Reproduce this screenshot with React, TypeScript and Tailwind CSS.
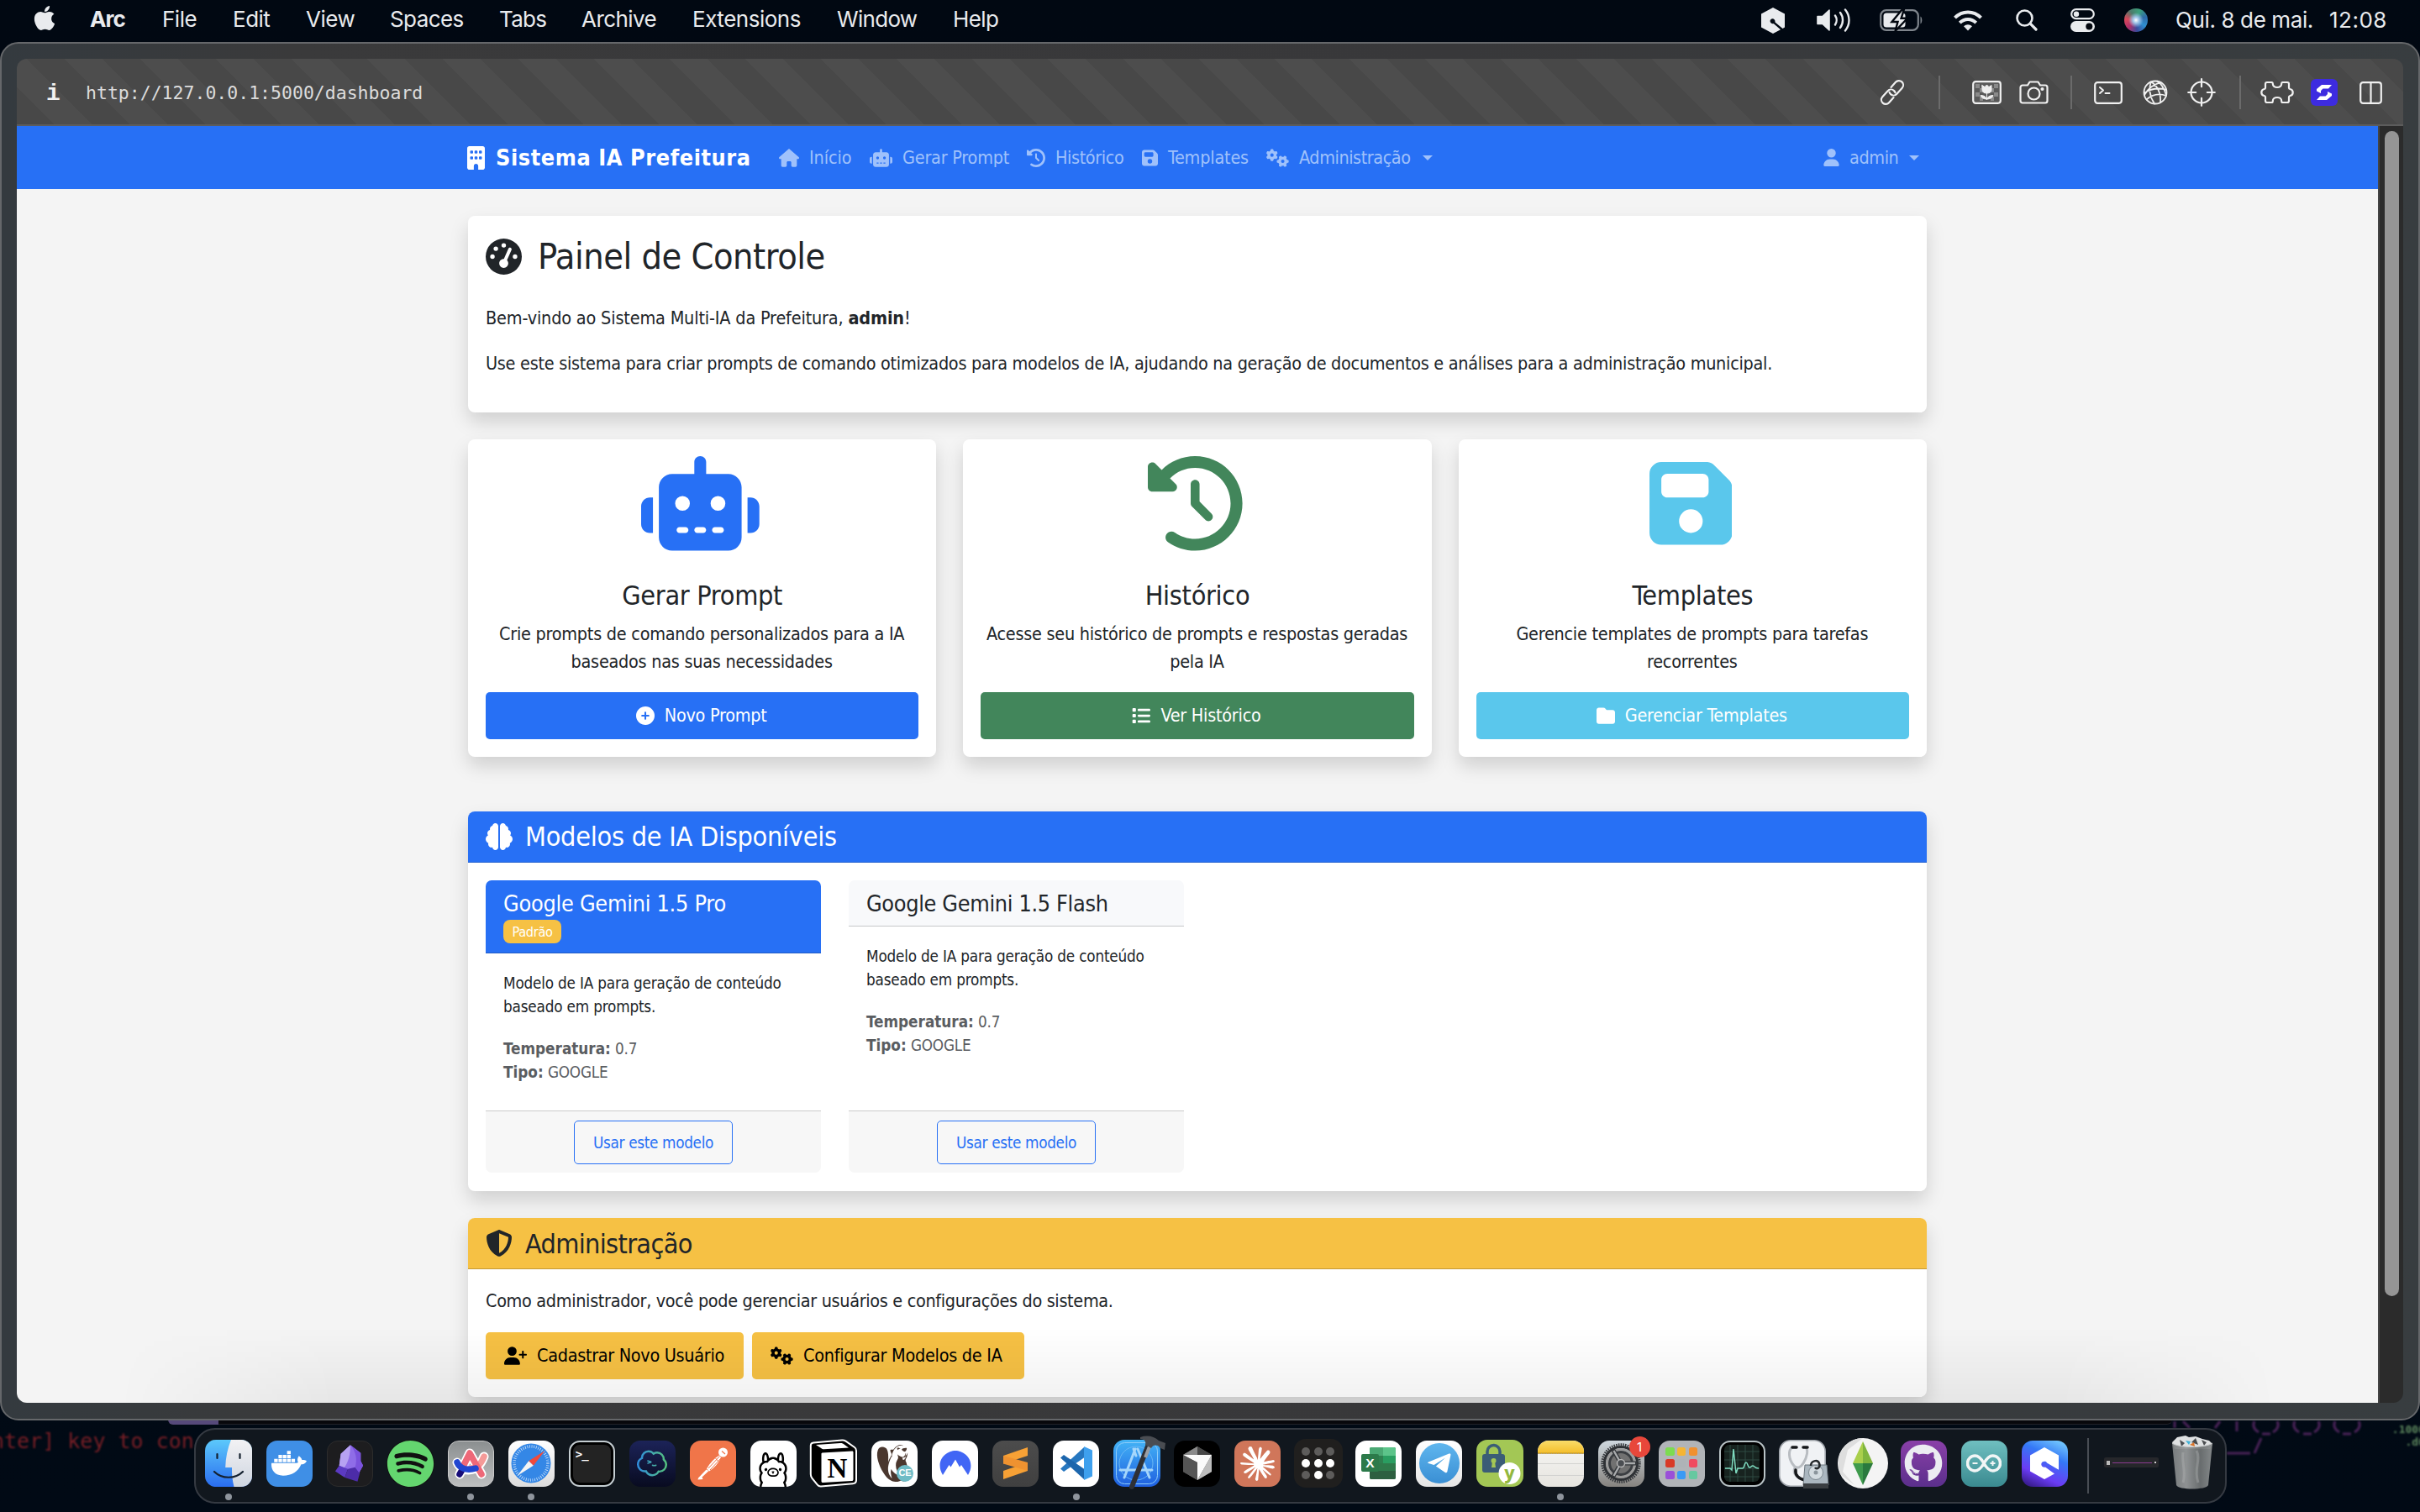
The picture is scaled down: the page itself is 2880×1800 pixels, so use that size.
import React from "react";
import type { ReactNode } from "react";
import {
  FaApple,
  FaBuilding,
  FaHouse,
  FaRobot,
  FaClockRotateLeft,
  FaFloppyDisk,
  FaGears,
  FaUser,
  FaGaugeHigh,
  FaCirclePlus,
  FaList,
  FaFolder,
  FaBrain,
  FaShieldHalved,
  FaUserPlus,
  FaDocker,
  FaSpotify,
  FaGithub,
} from "react-icons/fa6";
import { SiClaude, SiOllama, SiDbeaver, SiTermius } from "react-icons/si";

/* ---------- macOS menu bar ---------- */

function Menu({ w, ls, children }: { w: string; ls: string; children: ReactNode }) {
  return <span className={`shrink-0 whitespace-nowrap ${w} ${ls}`}>{children}</span>;
}

function MenuBar() {
  return (
    <div className="flex h-[50px] shrink-0 items-start pt-[7px] font-['Inter',sans-serif] text-[26px] leading-[32px] text-[#e9ebee]">
      <div className="flex w-[107px] shrink-0 pl-[38px]">
        <FaApple className="-mt-[2px] h-[33px] w-[30px]" />
      </div>
      <Menu w="w-[86px]" ls="font-bold tracking-[-0.9px]">Arc</Menu>
      <Menu w="w-[84px]" ls="tracking-[-0.5px]">File</Menu>
      <Menu w="w-[87px]" ls="tracking-[-0.5px]">Edit</Menu>
      <Menu w="w-[100px]" ls="tracking-[-0.5px]">View</Menu>
      <Menu w="w-[130px]" ls="tracking-[-0.6px]">Spaces</Menu>
      <Menu w="w-[98px]" ls="tracking-[-0.7px]">Tabs</Menu>
      <Menu w="w-[132px]" ls="tracking-[-0.55px]">Archive</Menu>
      <Menu w="w-[172px]" ls="tracking-[-0.48px]">Extensions</Menu>
      <Menu w="w-[138px]" ls="tracking-[-0.7px]">Window</Menu>
      <Menu w="w-[80px]" ls="tracking-[-0.6px]">Help</Menu>
      <div className="grow" />
      <div className="flex h-[34px] items-center">
        <svg className="mr-[38px] h-[31px] w-[28px]" viewBox="0 0 28 31">
          <path d="M14 0 28 7.5v16L25.500 25 16.500 17.500c.4-2.600-1.300-4.400-3.300-4.300-2 .2-3.200 2.300-2.200 4.300.8 1.500 2.500 2 3.700 1.500L23 26.300 14 31 0 23.500v-16z" fill="#e9ebee" />
        </svg>
        <svg className="mr-[35px] h-[28px] w-[40px]" viewBox="0 0 40 28" fill="none" stroke="#e9ebee" strokeWidth="2.400" strokeLinecap="round">
          <path d="M1 9.500h6l8-7.500v24l-8-7.500H1z" fill="#e9ebee" strokeWidth="1.600" strokeLinejoin="round" />
          <path d="M22 8.500c2.200 3.200 2.200 7.800 0 11M28 5c4 5.200 4 12.800 0 18M34 1.500c6 7.500 6 17.500 0 25" />
        </svg>
        <svg className="mr-[37px] h-[26px] w-[51px]" viewBox="0 0 51 26">
          <rect x="1.200" y="1.200" width="44.600" height="23.600" rx="6.500" fill="none" stroke="#7f858c" strokeWidth="2.200" />
          <path d="M48.500 8.500c2.400 1.400 2.400 7.600 0 9z" fill="#7f858c" />
          <rect x="4.500" y="4.500" width="26" height="17" rx="3.500" fill="#e9ebee" />
          <path d="M27 0 14.500 15h7L18.500 26 33 10.800h-7.400L29 0z" fill="#e9ebee" stroke="#02070f" strokeWidth="2.400" />
        </svg>
        <svg className="mr-[40px] h-[26px] w-[34px]" viewBox="0 0 34 26" fill="none" stroke="#e9ebee" strokeWidth="4">
          <path d="M1.500 10.200c8.600-8.900 22.400-8.900 31 0" />
          <path d="M7.300 16.200c5.400-5.500 14-5.500 19.400 0" />
          <path d="M17 25.500l-5-5.200c2.800-2.700 7.200-2.700 10 0z" fill="#e9ebee" stroke="none" />
        </svg>
        <svg className="mr-[39px] h-[26px] w-[26px]" viewBox="0 0 26 26" fill="none" stroke="#e9ebee" strokeLinecap="round">
          <circle cx="10.500" cy="10.500" r="9" strokeWidth="2.600" />
          <path d="M17.200 17.200 24 24" strokeWidth="3.200" />
        </svg>
        <svg className="mr-[35px] h-[28px] w-[29px]" viewBox="0 0 29 28">
          <rect x="1.200" y="1.200" width="26.600" height="11" rx="5.500" fill="none" stroke="#e9ebee" strokeWidth="2.200" />
          <circle cx="7" cy="6.700" r="3.200" fill="#e9ebee" />
          <rect x="0" y="15" width="29" height="13" rx="6.500" fill="#e9ebee" />
          <circle cx="22.300" cy="21.500" r="4" fill="#02070f" />
        </svg>
        <div className="mr-[33px] h-[28px] w-[28px] rounded-full bg-[radial-gradient(circle_at_50%_50%,#ffffff_0%,#9fc4e8_18%,transparent_45%),conic-gradient(from_20deg,#3aa17c,#2f6aa8,#2f8fd0,#3a4a9c,#b02f6a,#d8495a,#4c7a6a,#3aa17c)]" />
        <span className="w-[183px] whitespace-nowrap tracking-[-0.38px]">Qui. 8 de mai.</span>
        <span className="w-[108px] whitespace-nowrap tracking-[0.5px]">12:08</span>
      </div>
    </div>
  );
}

/* ---------- Browser toolbar ---------- */

const line = { fill: "none", stroke: "#f0f0f0", strokeWidth: 2.2, strokeLinecap: "round" as const, strokeLinejoin: "round" as const };

function Divider({ m }: { m: string }) {
  return <div className={`h-[40px] w-[2px] shrink-0 bg-[#6b6b6b] ${m}`} />;
}

function Toolbar() {
  return (
    <div className="flex h-[80px] shrink-0 items-center rounded-t-[12px] border-b-2 border-[#5c5c5c] bg-[repeating-linear-gradient(45deg,#484848_0px,#484848_31.8px,#4d4d4d_31.800px,#4d4d4d_63.600px)] pt-[2px] font-['DejaVu_Sans_Mono',monospace]">
      <span className="w-[82px] pl-[35px] pt-[3px] font-['Liberation_Mono',monospace] text-[28px] font-bold leading-[40px] text-[#f2f2f2]">i</span>
      <span className="pt-[2px] text-[21.5px] leading-[40px] text-[#dcdcdc]">http://127.0.0.1:5000/dashboard</span>
      <div className="grow" />
      <svg className="h-[32px] w-[32px] overflow-visible" viewBox="0 0 32 32" {...line}>
        <g transform="rotate(-48 16 16)">
          <path d="M12.500 21.200H4.300a5.200 5.200 0 0 1 0-10.400h9.400a5.200 5.200 0 0 1 5.200 5.200c0 1-.3 2-.8 2.800" />
          <path d="M19.500 10.800h8.200a5.200 5.200 0 0 1 0 10.400h-9.400a5.200 5.200 0 0 1-5.200-5.200c0-1 .3-2 .8-2.800" />
        </g>
      </svg>
      <Divider m="ml-[39px] mr-[38px]" />
      <svg className="h-[28px] w-[35px]" viewBox="0 0 35 28" {...line}>
        <rect x="1.200" y="1.200" width="32.600" height="25.600" rx="3" fill="#5a5a5a" />
        <path d="M4 4h5v5H4zM26 4h5v5h-5zM4 14h5v5H4zM26 14h5v5h-5zM9 9h4v5H9zM22 9h4v5h-4zM9 19h4v5H9zM22 19h4v5h-4z" fill="#8a8a8a" stroke="none" />
        <path d="M12 5.500l3 2 2.500-2.500L20 7.500l3-2v5.500c0 2.500-2 4-5.500 4S12 13.500 12 11zM17.500 14v8M17.500 22c-4.500 0-7-2-7.500-4.500 4 0 6.500 1.500 7.500 4.500zM17.500 22c4.500 0 7-2 7.500-4.500-4 0-6.500 1.500-7.500 4.500z" fill="#f0f0f0" strokeWidth="1" />
      </svg>
      <svg className="ml-[21px] h-[28px] w-[35px]" viewBox="0 0 35 28" {...line}>
        <path d="M4 5.500h6l2.500-4h10l2.500 4h6a2.500 2.500 0 0 1 2.500 2.500v16a2.500 2.500 0 0 1-2.500 2.500H4A2.500 2.500 0 0 1 1.500 24V8A2.500 2.500 0 0 1 4 5.500z" />
        <circle cx="17.500" cy="15.500" r="7" />
        <circle cx="27.500" cy="10" r="1" />
      </svg>
      <Divider m="ml-[26px] mr-[26px]" />
      <svg className="h-[27px] w-[34px]" viewBox="0 0 34 27" {...line}>
        <rect x="1.200" y="1.200" width="31.600" height="24.600" rx="3" />
        <path d="M7 7l4 3.500L7 14M13.500 14h5" strokeWidth="2" />
      </svg>
      <svg className="ml-[24px] h-[30px] w-[30px]" viewBox="0 0 30 30" {...line} strokeWidth="1.800">
        <circle cx="15" cy="15" r="13.500" />
        <path d="M10 2.500c-3 7-2 17 4 26M10 2.500c7 4 12 13 11 24.500M21.500 3.200c-8 2-15 7-19.500 14.800M27.800 11.500c-9-2-19-.5-26 4M28 19c-7-2.500-16-2-23.500 4.500M17 1.600c5 3 8.500 8 10.800 16.400" />
      </svg>
      <svg className="ml-[23px] h-[34px] w-[34px]" viewBox="0 0 34 34" {...line}>
        <circle cx="17" cy="17" r="12.500" />
        <path d="M17 1.200v9M17 23.800v9M1.200 17h9M23.800 17h9" />
      </svg>
      <Divider m="ml-[28px] mr-[23px]" />
      <svg className="h-[28px] w-[40px]" viewBox="0 0 40 28" {...line}>
        <path d="M8 2h5.500c1 0 1.300.8 1.300 1.800 0 2.400 2.200 4.200 5.200 4.200s5.200-1.800 5.200-4.200c0-1 .3-1.800 1.300-1.800H32c1.200 0 2 .8 2 2v4.500c0 .8.600 1.300 1.400 1.500 2 .4 3.300 2 3.300 4s-1.300 3.600-3.300 4c-.8.200-1.400.7-1.400 1.500V24c0 1.200-.8 2-2 2h-5.500c-1 0-1.300-.8-1.300-1.800 0-2.400-2.200-4.200-5.200-4.200s-5.200 1.800-5.200 4.200c0 1-.3 1.800-1.300 1.800H8c-1.200 0-2-.8-2-2v-4.500c0-.8-.6-1.300-1.400-1.500-2-.4-3.300-2-3.300-4s1.300-3.600 3.300-4C5.400 9.800 6 9.300 6 8.500V4c0-1.200.8-2 2-2z" />
      </svg>
      <div className="ml-[20px] flex h-[32px] w-[32px] items-center justify-center rounded-[6px] bg-[#3d2be0]">
        <svg className="h-[20px] w-[20px]" viewBox="0 0 20 20">
          <path d="M7 1h12l-4 4.500H8.500L6 8v3L1 8.500V6zM13 19H1l4-4.500h6.500L14 12V9l5 2.500V14z" fill="#fff" />
        </svg>
      </div>
      <svg className="ml-[26px] mr-[25px] h-[27px] w-[27px]" viewBox="0 0 27 27" {...line}>
        <rect x="1.200" y="1.200" width="24.600" height="24.600" rx="3" />
        <path d="M13.500 1.200v24.600" />
      </svg>
    </div>
  );
}

/* ---------- Web page ---------- */

function Caret() {
  return <div className="ml-[14px] h-0 w-0 border-x-[6px] border-t-[6px] border-x-transparent border-t-[#9fc1fb]" />;
}

function Navbar() {
  return (
    <div className="flex h-[75px] items-center bg-[#2770f5] pl-[536px] text-[21.44px] text-[#9fc1fb]">
      <FaBuilding className="h-[28px] w-[21px] text-white" />
      <span className="ml-[13px] w-[337px] whitespace-nowrap pt-[1px] text-[26.8px] font-bold tracking-[0.58px] text-white">Sistema IA Prefeitura</span>
      <FaHouse className="h-[22px] w-[24px]" />
      <span className="ml-[12px] w-[72px] pt-[1px] tracking-[-0.1px]">Início</span>
      <FaRobot className="h-[22px] w-[27px]" />
      <span className="ml-[12px] w-[148px] whitespace-nowrap pt-[1px] tracking-[-0.22px]">Gerar Prompt</span>
      <FaClockRotateLeft className="h-[22px] w-[22px]" />
      <span className="ml-[12px] w-[103px] pt-[1px] tracking-[-0.4px]">Histórico</span>
      <FaFloppyDisk className="h-[22px] w-[19px]" />
      <span className="ml-[12px] w-[117px] pt-[1px] tracking-[-0.19px]">Templates</span>
      <FaGears className="h-[22px] w-[27px]" />
      <span className="ml-[12px] pt-[1px] tracking-[-0.45px]">Administração</span>
      <Caret />
      <div className="grow" />
      <FaUser className="h-[21px] w-[19px]" />
      <span className="ml-[12px] w-[57px] pt-[1px] tracking-[-0.4px]">admin</span>
      <Caret />
      <div className="w-[546px]" />
    </div>
  );
}

const card = "rounded-[8px] bg-white shadow-[0_11px_22px_rgba(0,0,0,0.15)]";

function ActionCard({ art, title, lines, btn, color }: { art: ReactNode; title: string; lines: string[]; btn: ReactNode; color: string }) {
  return (
    <div className={`flex h-[378px] flex-col items-center px-[21px] pt-[20px] ${card}`}>
      <div className="mr-[5px] flex h-[113px] items-center">{art}</div>
      <h4 className="mt-[34px] text-[32.16px] leading-[38px] tracking-[-0.3px]">{title}</h4>
      <div className="mt-[10px] mr-[1px] text-center leading-[33px] tracking-[-0.25px]">
        {lines.map((l) => (
          <div key={l} className="whitespace-nowrap">{l}</div>
        ))}
      </div>
      <div className={`mt-[20px] flex h-[56px] w-full items-center justify-center gap-[12px] rounded-[5px] pr-[2px] tracking-[-0.25px] text-white ${color}`}>{btn}</div>
    </div>
  );
}

function ModelCard({ head, children }: { head: string; children: ReactNode }) {
  return (
    <div className="flex h-[348px] w-[399px] flex-col overflow-hidden rounded-[7px] text-[18.76px] leading-[28px]">
      <div className={`border-b px-[21px] pt-[12px] ${head}`}>{children}</div>
      <div className="grow px-[21px] pt-[22px] tracking-[-0.18px]">
        <div>Modelo de IA para geração de conteúdo</div>
        <div>baseado em prompts.</div>
        <div className="mt-[22px] text-[#5a5d61]">
          <b className="tracking-normal">Temperatura:</b> 0.7
        </div>
        <div className="text-[#5a5d61]">
          <b className="tracking-normal">Tipo:</b> GOOGLE
        </div>
      </div>
      <div className="flex h-[74px] justify-center border-t border-[#cbcbcb] bg-[#f7f7f7] pt-[11px]">
        <div className="flex h-[52px] w-[189px] items-center justify-center rounded-[5px] border border-[#2770f5] pt-[1px] tracking-[-0.32px] text-[#2770f5]">Usar este modelo</div>
      </div>
    </div>
  );
}

function Page() {
  return (
    <div className="relative h-[1520px] w-[2810px] overflow-hidden rounded-bl-[12px] bg-[#f4f4f4] font-['DejaVu_Sans_Condensed','DejaVu_Sans',sans-serif] text-[21.44px] text-[#212529]">
      <Navbar />
      <div className="ml-[537px] flex w-[1736px] flex-col pt-[32px]">
        <div className={`h-[234px] px-[21px] pt-[22px] ${card}`}>
          <div className="flex items-center gap-[19px]">
            <FaGaugeHigh className="h-[43px] w-[43px]" />
            <h1 className="text-[42.88px] leading-[52px] tracking-[-0.48px]">Painel de Controle</h1>
          </div>
          <p className="mt-[32px] leading-[32px] tracking-[-0.16px]">
            Bem-vindo ao Sistema Multi-IA da Prefeitura, <b>admin</b>!
          </p>
          <p className="mt-[22px] whitespace-nowrap leading-[32px] tracking-[-0.273px]">
            Use este sistema para criar prompts de comando otimizados para modelos de IA, ajudando na geração de documentos e análises para a administração municipal.
          </p>
        </div>

        <div className="mt-[32px] grid grid-cols-3 gap-[32px]">
          <ActionCard
            art={<FaRobot className="h-[112.600px] w-[140.700px] text-[#2770f5]" />}
            title="Gerar Prompt"
            lines={["Crie prompts de comando personalizados para a IA", "baseados nas suas necessidades"]}
            color="bg-[#2770f5]"
            btn={<><FaCirclePlus className="h-[22px] w-[22px]" /><span className="pt-[1px]">Novo Prompt</span></>}
          />
          <ActionCard
            art={<FaClockRotateLeft className="h-[112.600px] w-[112.600px] text-[#42865b]" />}
            title="Histórico"
            lines={["Acesse seu histórico de prompts e respostas geradas", "pela IA"]}
            color="bg-[#42865b]"
            btn={<><FaList className="h-[22px] w-[22px]" /><span className="pt-[1px]">Ver Histórico</span></>}
          />
          <ActionCard
            art={<FaFloppyDisk className="h-[112.600px] w-[98.600px] text-[#5ac7ec]" />}
            title="Templates"
            lines={["Gerencie templates de prompts para tarefas", "recorrentes"]}
            color="bg-[#5ac7ec]"
            btn={<><FaFolder className="h-[22px] w-[22px]" /><span className="pt-[1px]">Gerenciar Templates</span></>}
          />
        </div>

        <div className={`mt-[65px] h-[452px] overflow-hidden ${card}`}>
          <div className="flex h-[61px] items-center gap-[15px] border-b border-[#2361cf] bg-[#2770f5] px-[21px] text-white">
            <FaBrain className="h-[32px] w-[32px]" />
            <h4 className="text-[32.16px] leading-[38px] tracking-[-0.27px]">Modelos de IA Disponíveis</h4>
          </div>
          <div className="flex gap-[33px] px-[21px] pt-[21px]">
            <ModelCard head="border-[#1f5ac4] bg-[#2770f5] pb-[11px] text-white">
              <div className="text-[26.8px] leading-[32px] tracking-[-0.25px]">Google Gemini 1.5 Pro</div>
              <div className="mt-[3px] flex h-[28px] w-[69px] items-center justify-center rounded-[8px] bg-[#f6c144] pt-[1px] text-[16.2px] tracking-[-0.3px]">Padrão</div>
            </ModelCard>
            <ModelCard head="border-[#c6c8c9] bg-[#f8f9fb] pb-[10px]">
              <div className="text-[26.8px] leading-[32px] tracking-[-0.33px]">Google Gemini 1.5 Flash</div>
            </ModelCard>
          </div>
        </div>

        <div className={`mt-[32px] h-[213px] overflow-hidden ${card}`}>
          <div className="flex h-[61px] items-center gap-[15px] border-b border-[#c59a36] bg-[#f6c144] px-[21px]">
            <FaShieldHalved className="h-[32px] w-[32px]" />
            <h4 className="pt-[1px] text-[32.16px] leading-[38px] tracking-[-0.68px]">Administração</h4>
          </div>
          <div className="px-[21px] pt-[22px]">
            <p className="leading-[32px] tracking-[-0.33px]">Como administrador, você pode gerenciar usuários e configurações do sistema.</p>
            <div className="mt-[21px] flex gap-[10px] text-black">
              <div className="flex h-[56px] w-[307px] items-center gap-[12px] whitespace-nowrap rounded-[5px] bg-[#f6c144] pl-[22px] tracking-[-0.3px]">
                <FaUserPlus className="h-[22px] w-[27px]" />
                <span className="pt-[1px]">Cadastrar Novo Usuário</span>
              </div>
              <div className="flex h-[56px] w-[324px] items-center gap-[12px] whitespace-nowrap rounded-[5px] bg-[#f6c144] pl-[22px] tracking-[-0.26px]">
                <FaGears className="h-[22px] w-[27px]" />
                <span className="pt-[1px]">Configurar Modelos de IA</span>
              </div>
            </div>
          </div>
        </div>
      </div>
      <div className="absolute inset-x-[120px] bottom-0 h-[90px] bg-[linear-gradient(to_bottom,transparent,rgba(0,0,0,0.055))] [mask-image:linear-gradient(to_right,transparent,black_260px,black_calc(100%-260px),transparent)]" />
    </div>
  );
}

/* ---------- Dock ---------- */

const svgBox = "h-[56px] w-[56px] overflow-visible";
const tile = "flex h-[55px] w-[55px] items-center justify-center rounded-[13px] overflow-hidden";

function Slot({ dot, children }: { dot?: boolean; children: ReactNode }) {
  return (
    <div className="flex w-[72.050px] shrink-0 flex-col items-center pt-[12px]">
      <div className="flex h-[56px] items-center">{children}</div>
      {dot && <div className="mt-[8px] h-[8px] w-[8px] rounded-full bg-[#8f959d]" />}
    </div>
  );
}

function Finder() {
  return (
    <svg className={svgBox} viewBox="0 0 56 56">
      <defs>
        <linearGradient id="fd" x1="0" y1="0" x2="0" y2="1"><stop offset="0" stopColor="#5cc9fb" /><stop offset="1" stopColor="#2a6df0" /></linearGradient>
        <linearGradient id="fd2" x1="0" y1="0" x2="0" y2="1"><stop offset="0" stopColor="#f2f2f4" /><stop offset="1" stopColor="#cfd6e0" /></linearGradient>
        <clipPath id="fc"><rect width="56" height="56" rx="13" /></clipPath>
      </defs>
      <g clipPath="url(#fc)">
        <rect width="56" height="56" fill="url(#fd)" />
        <path d="M31 0c-4 10-6.500 21-6.800 33H32c-.2 8 .5 15.500 2.500 23H56V0z" fill="url(#fd2)" />
      </g>
      <path d="M14.500 17v5M41.500 17v5M11 38c9 9 25 9 34 0" stroke="#14202e" strokeWidth="2.200" fill="none" strokeLinecap="round" />
    </svg>
  );
}

function Obsidian() {
  return (
    <div className={`${tile} border border-[#2c2c2c] bg-[#1d1d1f]`}>
      <svg className="h-[46px] w-[36px]" viewBox="0 0 38 48">
        <path d="M20 1 8 12 6 27l7 5 12-1 6 5 5-9-3-6 0-10z" fill="#8f6de8" />
        <path d="M20 1 8 12 6 27l6 3c6-8 8-18 8-29z" fill="#b7a2f2" />
        <path d="M6 27 1 34l12 8 4-11z" fill="#5b3ac2" />
        <path d="M17 31 13 42l16 5 3-11-6-7z" fill="#4c2ca8" />
        <path d="M20 1l13 10v10l3 6-5 9-5-7c3-10 1-20-6-28z" fill="#7a52dc" />
      </svg>
    </div>
  );
}

function Arc() {
  return (
    <div className={`${tile} border border-[#c9c9c9] bg-[linear-gradient(#8b8f90,#bdbfc0)]`}>
      <svg className="h-[40px] w-[46px]" viewBox="0 0 46 40" fill="none" strokeLinecap="round">
        <path d="M10 33 22 8 36 33M7 19c5 12 24 14 32-7" stroke="#fff" strokeWidth="11" strokeLinejoin="round" />
        <path d="M39 12c-4 11-11 14-16 14" stroke="#f49a98" strokeWidth="7.500" />
        <path d="M10 33 14 26" stroke="#160c78" strokeWidth="7.500" />
        <path d="M14 24 22 8 36 33" stroke="#ee6878" strokeWidth="7.500" strokeLinejoin="round" />
        <path d="M7 19c3 7 11 10 22 7" stroke="#2046d0" strokeWidth="7.500" />
      </svg>
    </div>
  );
}

function Safari() {
  return (
    <div className={`${tile} bg-[linear-gradient(#ffffff,#dcdcdc)]`}>
      <svg className="h-[48px] w-[48px]" viewBox="0 0 48 48">
        <circle cx="24" cy="24" r="23.500" fill="#3487e6" />
        <circle cx="24" cy="24" r="20" fill="none" stroke="#cfe4fb" strokeWidth="3.500" strokeDasharray=".8 1.820" />
        <path d="M40.500 9 21.200 21.200l5.600 5.600z" fill="#f04a3c" />
        <path d="M7.500 39 21.200 21.200l5.600 5.600z" fill="#f4f4f4" />
      </svg>
    </div>
  );
}

function Terminal() {
  return (
    <div className="flex h-[55px] w-[55px] items-start rounded-[13px] border-2 border-[#c5ced2] bg-[#232323] pl-[6px] pt-[6px] font-['DejaVu_Sans_Mono',monospace] text-[14px] font-bold leading-[16px] tracking-[-1px] text-white shadow-[inset_0_0_0_3px_#000]">
      &gt;_
    </div>
  );
}

function Termius() {
  return (
    <div className={`${tile} relative bg-[linear-gradient(#1c2358,#080b20)]`}>
      <svg className="absolute h-0 w-0">
        <defs><linearGradient id="tm"><stop offset="0" stopColor="#2f8ce0" /><stop offset="1" stopColor="#56c47c" /></linearGradient></defs>
      </svg>
      <SiTermius className="h-[36px] w-[38px] [&_path]:fill-[url(#tm)]" />
    </div>
  );
}

function Postman() {
  return (
    <div className={`${tile} bg-[#f07549]`}>
      <svg className="h-[42px] w-[42px]" viewBox="0 0 42 42">
        <circle cx="33.500" cy="8" r="5.500" fill="#fff" />
        <path d="M32 6.500l4 3.500" stroke="#f07549" strokeWidth="1.200" />
        <path d="M29 11.500c-6 3.500-11 9-15 16l3 3c6-4 11-9.500 14-16z" fill="#fff" />
        <path d="M29.500 12.500 16 27M31 15 18 29M24.500 15l5 5.500" stroke="#f07549" strokeWidth="1" />
        <path d="M13.500 28.500 4 38.500l-.5 2 6-.5-1-2.500 8-7.500z" fill="#fff" />
      </svg>
    </div>
  );
}

function Notion() {
  return (
    <svg className={svgBox} viewBox="0 0 56 56">
      <path d="M4 3.500 38 .5c2-.2 3 .2 4.500 1.200L53 9c1.500 1 2 2 2 4v35c0 2.500-1.200 4-4 4.200L13 55.500c-2 .1-3-.3-4.200-1.800L2.500 46C1.200 44.300.8 43 .8 41V7c0-2 1-3.300 3.200-3.500z" fill="#000" stroke="#fff" strokeWidth="2" />
      <path d="M7 6 36 4c1.800-.1 2.500.1 3.500.8L46 9.500 16.500 11.300c-1.500 0-2-.2-3-1z" fill="#fff" />
      <path d="M14.500 15.500 50 13.500c1 0 1.500.5 1.500 1.500v32c0 1.200-.6 2-2 2.100L15.500 51c-1.400 0-2-.6-2-1.800V17c0-1 .3-1.400 1-1.500z" fill="#fff" />
      <text x="32.500" y="44.500" fontFamily="Liberation Serif, serif" fontWeight="700" fontSize="33" textAnchor="middle" fill="#000">N</text>
    </svg>
  );
}

function DBeaver() {
  return (
    <div className={`${tile} relative bg-white`}>
      <SiDbeaver className="-ml-[5px] h-[46px] w-[44px] text-[#4a372e]" />
      <span className="absolute bottom-[6px] right-[5px] flex h-[20px] w-[20px] items-center justify-center rounded-full bg-[#6fbcc6] font-['Liberation_Sans',sans-serif] text-[11px] font-bold leading-none text-white">CE</span>
    </div>
  );
}

function Nord() {
  return (
    <div className={`${tile} bg-white`}>
      <svg className="h-[30px] w-[38px]" viewBox="0 0 38 30">
        <path d="M4 29C-6 12 8 0 19 0s25 12 15 29l-8-12-2 2.500-5-9-5.500 9L11.500 17z" fill="#4166f5" />
      </svg>
    </div>
  );
}

function Sublime() {
  return (
    <div className={`${tile} bg-[linear-gradient(#4c4c4c,#404040)]`}>
      <svg className="h-[38px] w-[31px]" viewBox="0 0 31 38">
        <path d="M30 0v10L1 19.500V10z" fill="#f7a135" />
        <path d="M30 18v10L1 38V28z" fill="#f7a135" />
        <path d="M1 10l29 8v10L1 19.500z" fill="#ef9230" />
      </svg>
    </div>
  );
}

function VSCode() {
  return (
    <div className={`${tile} bg-white`}>
      <svg className="h-[40px] w-[40px]" viewBox="0 0 40 40">
        <path d="M29 1 1 26.500l4 3.500L31 12z" fill="#2677c0" />
        <path d="M29 39 1 13.500 5 10l26 18z" fill="#1c66ad" />
        <path d="M29 0 39 4.500v31L29 40z" fill="#3ea0ee" />
      </svg>
    </div>
  );
}

function Xcode() {
  return (
    <svg className={svgBox} viewBox="0 0 56 56">
      <defs><linearGradient id="xc" x1="0" y1="0" x2="0" y2="1"><stop offset="0" stopColor="#43b4f6" /><stop offset="1" stopColor="#1f5fe0" /></linearGradient></defs>
      <rect width="56" height="56" rx="13" fill="url(#xc)" />
      <rect x="3.500" y="3.500" width="49" height="49" rx="10" fill="none" stroke="#8fcdf9" strokeWidth="1" />
      <circle cx="27" cy="28" r="20" fill="none" stroke="#6ab8f5" strokeWidth="1" />
      <path d="M26 11 13 45M29 11l14 34M8 36h38M24 11l3 8" stroke="#a5d6fb" strokeWidth="3" fill="none" strokeLinecap="round" />
      <path d="M42 5 22 56" stroke="#2e3036" strokeWidth="6" strokeLinecap="round" />
      <path d="M43 8 38 21" stroke="#9a9ea4" strokeWidth="4" />
      <path d="M32-3c8-3 17-1 22 4l8 3-1 8-5-2-3-3c-3-1-6-1-8 3l-7-4c1-4-1-7-6-7z" fill="#4a4d52" />
    </svg>
  );
}

function Cursor() {
  return (
    <div className={`${tile} bg-black`}>
      <svg className="h-[40px] w-[36px]" viewBox="0 0 36 40">
        <path d="M18 0 35 10v20L18 40 1 30V10z" fill="#6c6c6c" />
        <path d="M18 0 35 10H1z" fill="#474747" />
        <path d="M18 0v10L1 10z" fill="#8a8a8a" />
        <path d="M1 10h34L18 40V19z" fill="#fafafa" />
        <path d="M35 10v20L18 40z" fill="#bdbdbd" />
        <path d="M1 10l17 9v21L1 30z" fill="#555" />
      </svg>
    </div>
  );
}

function DotGrid() {
  const on = [3, 4, 5, 7];
  return (
    <div className="grid h-[58px] w-[58px] grid-cols-3 place-content-center gap-x-[4px] gap-y-[4px] rounded-[14px] bg-[#201f1e] px-[9px]">
      {[0, 1, 2, 3, 4, 5, 6, 7, 8].map((i) => (
        <div key={i} className={`h-[10px] w-[10px] rounded-full ${on.includes(i) ? "bg-white" : "bg-[#5d5c5b]"}`} />
      ))}
    </div>
  );
}

function Excel() {
  return (
    <div className={`${tile} bg-white`}>
      <svg className="h-[38px] w-[42px]" viewBox="0 0 42 38">
        <rect x="10" y="0" width="31" height="38" rx="2" fill="#2a9e61" />
        <path d="M10 2a2 2 0 0 1 2-2h14v10H10z" fill="#4aa873" />
        <path d="M26 0h13a2 2 0 0 1 2 2v8H26z" fill="#5cc48a" />
        <path d="M10 10h16v9H10z" fill="#2f8050" />
        <path d="M10 19h31v9H10z" fill="#2f7a4b" />
        <path d="M10 28h31v8a2 2 0 0 1-2 2H12a2 2 0 0 1-2-2z" fill="#2d5f40" />
        <rect x="0" y="8" width="21" height="21" rx="2" fill="#2c7a4a" />
        <text x="10.500" y="24" fontFamily="Liberation Sans, sans-serif" fontWeight="700" fontSize="15.500" textAnchor="middle" fill="#fff">X</text>
      </svg>
    </div>
  );
}

function Telegram() {
  return (
    <div className={`${tile} bg-[linear-gradient(#ffffff,#e6e6e6)]`}>
      <div className="flex h-[48px] w-[48px] items-center justify-center rounded-full bg-[linear-gradient(#5fb6ee,#3a8fd4)]">
        <svg className="h-[24px] w-[28px]" viewBox="0 0 28 24">
          <path d="M1 10.500 25.500.6c1.300-.5 2.200.2 1.900 1.700l-4 19.500c-.3 1.500-1.300 1.800-2.500 1.100l-11-7.500L21 5.500 7.500 14 1 12c-1.200-.4-1.200-1 0-1.500z" fill="#fff" />
        </svg>
      </div>
    </div>
  );
}

function YubiAuth() {
  return (
    <svg className={svgBox} viewBox="0 0 56 56">
      <rect width="56" height="56" rx="13" fill="#a3c755" />
      <path d="M13 20v-6a7.500 7.500 0 0 1 15 0v6" fill="none" stroke="#3b5d76" strokeWidth="3.500" />
      <rect x="7" y="17" width="27" height="22" rx="3" fill="#3b5d76" />
      <circle cx="20.500" cy="25" r="3" fill="#a3c755" />
      <path d="M19 26h3l1 7h-5z" fill="#a3c755" />
      <circle cx="39.500" cy="40" r="13" fill="#fff" />
      <text x="39.500" y="46.500" fontFamily="Noto Sans, sans-serif" fontWeight="800" fontSize="21" textAnchor="middle" fill="#93b83e">y</text>
    </svg>
  );
}

function Notes() {
  return (
    <div className="flex h-[55px] w-[55px] flex-col overflow-hidden rounded-[13px] bg-[linear-gradient(#f7f7f5,#e6e4df)]">
      <div className="h-[14px] bg-[linear-gradient(#f9dc6a,#f5c02e)]" />
      <div className="h-[2px] border-b border-dotted border-[#a8a294] bg-[#d9a928]" />
      <div className="mt-[11px] h-px bg-[#d2d2d0]" />
      <div className="mt-[13px] h-px bg-[#d2d2d0]" />
    </div>
  );
}

function Settings() {
  return (
    <div className="relative h-[55px] w-[55px]">
      <div className={`${tile} bg-[linear-gradient(#cfd8df,#86837f)]`}>
        <svg className="h-[48px] w-[48px]" viewBox="0 0 48 48" fill="none">
          <circle cx="24" cy="24" r="22" stroke="#33363a" strokeWidth="3.500" strokeDasharray="1.500 1.200" />
          <circle cx="24" cy="24" r="19.500" stroke="#2e3135" strokeWidth="3" />
          <circle cx="24" cy="24" r="16.500" stroke="#9b9b9b" strokeWidth="2.500" />
          <circle cx="24" cy="24" r="13.500" fill="#717171" stroke="#3b3e42" strokeWidth="3" />
          <path d="M24 24h19M24 24 14.500 7.500M24 24l-9.500 16.500" stroke="#34373b" strokeWidth="5" />
          <path d="M24 24h17M24 24 15.500 9M24 24l-8.500 15" stroke="#a9abad" strokeWidth="2.400" />
          <circle cx="24" cy="24" r="4.500" fill="#4b4e52" stroke="#b5b5b5" strokeWidth="1.500" />
        </svg>
      </div>
      <span className="absolute -right-[7px] -top-[5px] flex h-[25px] w-[25px] items-center justify-center rounded-full bg-[#e8473b] font-['Inter',sans-serif] text-[15px] leading-none text-white">1</span>
    </div>
  );
}

const padColors = ["bg-[#7cdc50]", "bg-[#f5b534]", "bg-[#f09030]", "bg-[#d83a28]", "bg-[#aeb3b7]", "bg-[#f04a60]", "bg-[#9a50d8]", "bg-[#3a9af5]", "bg-[#66c8a0]"];

function Launchpad() {
  return (
    <div className="grid h-[55px] w-[55px] grid-cols-3 place-content-center gap-[3.500px] rounded-[13px] bg-[#b1b4b8] px-[8.500px]">
      {padColors.map((c) => (
        <div key={c} className={`h-[10.500px] w-[10.500px] rounded-[2.500px] ${c}`} />
      ))}
    </div>
  );
}

function Activity() {
  return (
    <div className="flex h-[55px] w-[55px] items-center justify-center rounded-[13px] border-2 border-[#b9c3c6] bg-black">
      <svg className="h-[44px] w-[42px]" viewBox="0 0 42 44" fill="none">
        <rect width="42" height="44" rx="6" fill="#17231f" />
        <path d="M7 0v44M16 0v44M25 0v44M34 0v44M0 8h42M0 18h42M0 28h42M0 38h42" stroke="#2f4a42" strokeWidth="1" />
        <path d="M1 28h6l2 2 2-25 3 29 2-6h6c2 0 2-7 4-7s2 6 4 6 2-2 4-2 2 3 7 3" stroke="#7fdcc0" strokeWidth="1.500" />
      </svg>
    </div>
  );
}

function DiskUtility() {
  return (
    <svg className={svgBox} viewBox="0 0 56 56">
      <rect x=".8" y=".8" width="54.400" height="54.400" rx="13" fill="#f0f2f5" stroke="#9ca1a8" strokeWidth="1.600" />
      <path d="M16 9c-5 3-5 14 2 22 4 4 8 2 11-3 5-8 6-16 3-19M19 33c-3 8 3 13 12 14" fill="none" stroke="#b9bdc2" strokeWidth="3" />
      <path d="M16 9h5M29 9h5M20 36c-1 6 4 11 11 12" stroke="#15171a" strokeWidth="3.500" strokeLinecap="round" fill="none" />
      <path d="M31 30h26l2 24H29z" fill="#aab6bf" stroke="#6d777f" />
      <circle cx="44" cy="39" r="8.500" fill="#d3dbe0" stroke="#7d8890" />
      <circle cx="44" cy="39" r="2.500" fill="#8b959c" />
      <rect x="29" y="52" width="30" height="6" fill="#3a3e42" />
      <path d="M38 31c0-6 8-8 10-3s-3 8-5 5" fill="none" stroke="#24282b" strokeWidth="2.500" />
    </svg>
  );
}

function Sims() {
  return (
    <svg className="h-[60px] w-[60px]" viewBox="0 0 60 60">
      <circle cx="30" cy="30" r="30" fill="#f4f4f4" />
      <path d="M30 0 12 14 6 40l14 16L4 44A30 30 0 0 1 30 0z" fill="#dedede" />
      <path d="M30 4 18 30h12z" fill="#a9cf4c" />
      <path d="M30 4 42 30H30z" fill="#7fb53e" />
      <path d="M30 56 18 30h12z" fill="#3f9a4c" />
      <path d="M30 56 42 30H30z" fill="#2a7a3e" />
    </svg>
  );
}

function ChatHex() {
  return (
    <div className={`${tile} bg-[linear-gradient(205deg,#7fd8ff_0%,#3478f6_35%,#6a3cf5_70%,#2a1370_100%)]`}>
      <svg className="h-[38px] w-[34px]" viewBox="0 0 34 38">
        <path d="M17 0 34 9.500v17.300L20 18.500c-.5-2.500-5.500-2.500-6.500.5s2 5.500 4.500 4.500l11 8L17 38 0 28.500v-19z" fill="#fff" />
      </svg>
    </div>
  );
}

function MinimisedWindow() {
  return (
    <div className="flex h-[12px] w-[65px] items-center gap-[3px] rounded-[2px] bg-[#26272b] px-[3px]">
      <div className="h-[5px] w-[4px] bg-[#b9b9b9]" />
      <div className="h-px grow bg-[#8b3a90]" />
      <div className="h-[2px] w-[2px] bg-[#cfcfcf]" />
    </div>
  );
}

function Trash() {
  return (
    <svg className="h-[64px] w-[50px]" viewBox="0 0 50 64">
      <defs><linearGradient id="tr"><stop offset="0" stopColor="#7d8182" /><stop offset=".35" stopColor="#959899" /><stop offset=".7" stopColor="#6d7172" /><stop offset="1" stopColor="#8b8f90" /></linearGradient></defs>
      <path d="M1 8 7 2l10-2 4 2 8-1 8 3 8 2 4 4-3 6H4z" fill="#dfe1e2" />
      <path d="M10 5l6 4-4 4zM24 8l5-5 3 8zM36 5l6 3-3 4z" fill="#4a4d50" />
      <path d="M17 6l6 1-2 4z" fill="#3fb2d8" />
      <path d="M22 11l5-3 1 5z" fill="#d8742a" />
      <path d="M1 9c8 6 40 6 48 0l-5 50c-2 6-36 6-38 0z" fill="url(#tr)" opacity=".95" />
      <path d="M1 9c8 6 40 6 48 0" fill="none" stroke="#c8cbcc" strokeWidth="1" />
      <path d="M14 20c-2 12 4 22 0 36M30 18c6 12-4 20 2 38" stroke="#b6b9ba" strokeWidth="3" fill="none" opacity=".35" />
    </svg>
  );
}

function Dock() {
  return (
    <div className="flex h-[90px] w-[2419px] rounded-[25px] border-2 border-[#353a42] bg-[#11171e] pl-[3px]">
      <Slot dot><Finder /></Slot>
      <Slot><div className={`${tile} bg-[#3f8fe6]`}><FaDocker className="h-[40px] w-[42px] text-white" /></div></Slot>
      <Slot><Obsidian /></Slot>
      <Slot><div className="flex rounded-full bg-[#111]"><FaSpotify className="h-[57px] w-[57px] text-[#64d66f]" /></div></Slot>
      <Slot dot><Arc /></Slot>
      <Slot dot><Safari /></Slot>
      <Slot><Terminal /></Slot>
      <Slot><Termius /></Slot>
      <Slot><Postman /></Slot>
      <Slot><div className="flex h-[55px] w-[55px] items-end justify-center overflow-hidden rounded-[13px] bg-white"><SiOllama className="-mb-[3px] h-[44px] w-[44px] text-black" /></div></Slot>
      <Slot><Notion /></Slot>
      <Slot><DBeaver /></Slot>
      <Slot><Nord /></Slot>
      <Slot><Sublime /></Slot>
      <Slot dot><VSCode /></Slot>
      <Slot><Xcode /></Slot>
      <Slot><Cursor /></Slot>
      <Slot><div className={`${tile} bg-[#d0765a]`}><SiClaude className="h-[41px] w-[41px] text-white" /></div></Slot>
      <Slot><DotGrid /></Slot>
      <Slot><Excel /></Slot>
      <Slot><Telegram /></Slot>
      <Slot><YubiAuth /></Slot>
      <Slot dot><Notes /></Slot>
      <Slot><Settings /></Slot>
      <Slot><Launchpad /></Slot>
      <Slot><Activity /></Slot>
      <Slot><DiskUtility /></Slot>
      <Slot><Sims /></Slot>
      <Slot>
        <div className={`${tile} bg-[linear-gradient(#8a40a8,#5b2f8c)]`}>
          <FaGithub className="h-[46px] w-[46px] text-[#ececf2]" />
        </div>
      </Slot>
      <Slot>
        <div className={`${tile} bg-[linear-gradient(#6fbfc0,#3a8a90)]`}>
          <svg className="h-[22px] w-[42px]" viewBox="0 0 42 22" fill="none" stroke="#f2f6f6">
            <path d="M21 11C17 4 14 2 10.500 2a9 9 0 0 0 0 18C14 20 17 18 21 11s7-9 10.500-9a9 9 0 0 1 0 18C28 20 25 18 21 11z" strokeWidth="3.500" />
            <path d="M7.500 11h6M28.500 11h6M31.500 8v6" strokeWidth="2" />
          </svg>
        </div>
      </Slot>
      <Slot><ChatHex /></Slot>
      <div className="ml-[15px] mt-[10px] h-[66px] w-[2px] bg-[#484d54]" />
      <div className="ml-[18px] flex h-[78px] items-center"><MinimisedWindow /></div>
      <div className="ml-[15px] mt-[7px]"><Trash /></div>
    </div>
  );
}

/* ---------- Desktop ---------- */

function Wallpaper() {
  return (
    <div className="absolute inset-x-0 bottom-0 h-[110px] overflow-hidden">
      <div className="absolute left-[200px] top-0 h-[6px] w-[2385px] rounded-b-[6px] border-b border-[#222228] bg-[#08080c]" />
      <div className="absolute left-[200px] top-0 h-[6px] w-[60px] rounded-bl-[10px] bg-[#56497a]" />
      <span className="absolute -left-[10px] top-[10px] whitespace-pre font-['DejaVu_Sans_Mono',monospace] text-[25px] leading-[32px] text-[#7a1f26] blur-[1px]">nter] key to con</span>
      <svg className="absolute right-0 top-0 h-[80px] w-[300px] blur-[1px]" viewBox="0 0 300 80" fill="none" stroke="#4a2358" strokeWidth="3">
        <path d="M8 2v8M18 2l8 8M62 2l-6 8M82 2v12M103 2c-3 6 0 10 5 13M130 2c3 6 0 10-5 13M151 2c-3 6 0 10 5 13M179 2c3 6 0 10-5 13M199 2c-3 6 0 10 5 13M227 2c3 6 0 10-5 13M112 17h10M161 17h10M208 17h10M111 22l-8 18M70 40h28" />
      </svg>
      <div className="absolute -right-[6px] top-[4px] text-right font-['DejaVu_Sans_Mono',monospace] text-[13px] font-bold leading-[15px] text-[#5f8a5f] blur-[1px]">
        <div>.1000</div>
        <div>.d0</div>
      </div>
    </div>
  );
}

export default function App() {
  return (
    <div className="relative flex h-[1800px] w-[2880px] flex-col overflow-hidden bg-[linear-gradient(#010812,#010a15)]">
      <Wallpaper />
      <MenuBar />
      <div className="relative h-[1641px] shrink-0 rounded-[22px] border-2 border-[#65676a] bg-[linear-gradient(90deg,#343a3f_0%,#3a3a3b_12%,#38383a_60%,#383d40_100%)] px-[18px] pt-[18px]">
        <Toolbar />
        <div className="flex">
          <Page />
          <div className="h-[1520px] w-[30px] rounded-br-[12px] border-l-2 border-[#444444] bg-[#2b2b2b] pl-[6px] pt-[6px]">
            <div className="h-[1387px] w-[17px] rounded-full bg-[#959595]" />
          </div>
        </div>
      </div>
      <div className="relative mt-[9px] flex shrink-0 justify-start pl-[231px]">
        <Dock />
      </div>
    </div>
  );
}
